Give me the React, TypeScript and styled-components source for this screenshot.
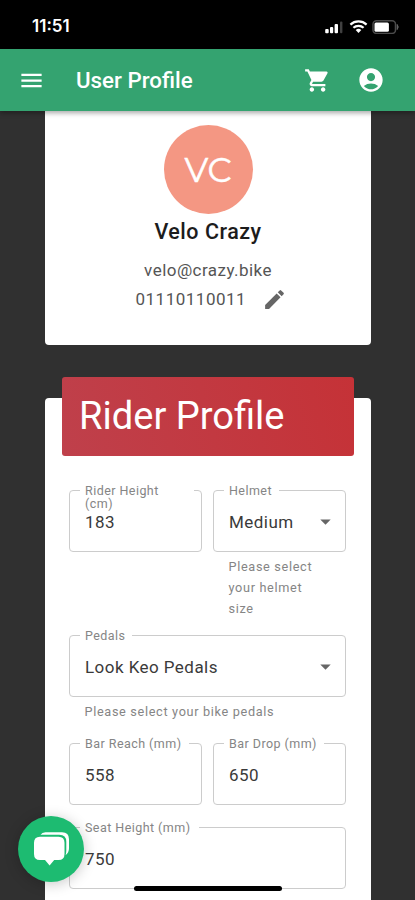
import React from "react";
import styled, { createGlobalStyle } from "styled-components";
import { MdMenu, MdShoppingCart, MdAccountCircle, MdEdit, MdArrowDropDown } from "react-icons/md";

const GlobalStyle = createGlobalStyle`
  * { box-sizing: border-box; }
  html, body { margin: 0; background: #303030; overflow: hidden; }
  body { font-family: Roboto, "Liberation Sans", sans-serif; }
`;

const Screen = styled.div`
  position: relative;
  width: 415px;
  height: 900px;
  overflow: hidden;
  display: flex;
  flex-direction: column;
  background: #303030;
`;

const StatusBar = styled.div`
  flex: none;
  height: 49px;
  padding: 3px 14px 0 32px;
  display: flex;
  align-items: center;
  justify-content: space-between;
  background: #000;
  color: #fff;
`;

const Clock = styled.span`
  font-family: Inter, sans-serif;
  font-size: 17px;
  font-weight: 600;
  letter-spacing: 0;
`;

const AppBar = styled.header`
  flex: none;
  z-index: 1;
  height: 62px;
  padding: 0 30px 0 18px;
  display: flex;
  align-items: center;
  background: #34a370;
  color: #fff;
  box-shadow: 0 2px 5px rgba(0, 0, 0, 0.35);
  svg { display: block; }
`;

const AppTitle = styled.h1`
  flex: 1;
  margin: 0 0 0 31px;
  font-size: 22.3px;
  font-weight: 500;
  line-height: 30px;
`;

const Actions = styled.div`
  display: flex;
  align-items: center;
  gap: 26px;
`;

const Content = styled.main`
  flex: none;
  width: 326px;
  margin-left: 45px;
`;

const ProfileCard = styled.section`
  height: 234px;
  padding-top: 14px;
  display: flex;
  flex-direction: column;
  align-items: center;
  background: #fff;
  border-radius: 0 0 4px 4px;
`;

const Avatar = styled.div`
  width: 89px;
  height: 89px;
  border-radius: 50%;
  display: flex;
  align-items: center;
  justify-content: center;
  background: #f49783;
  color: #fff;
  font-family: Montserrat, Lato, sans-serif;
  font-size: 34px;
  line-height: 40px;
  -webkit-text-stroke: 0.5px #fff;
`;

const Name = styled.h2`
  margin: 4px 0 0;
  color: #1c1c1c;
  font-size: 21.5px;
  font-weight: 500;
  line-height: 28px;
  letter-spacing: 0.5px;
`;

const Email = styled.p`
  margin: 10px 0 0;
  color: #555;
  font-size: 17px;
  line-height: 29px;
  letter-spacing: 0.45px;
`;

const PhoneRow = styled.div`
  width: 151px;
  margin-left: 6px;
  display: flex;
  align-items: center;
  justify-content: space-between;
  color: #555;
  font-size: 17px;
  line-height: 29px;
  letter-spacing: 0.5px;
  svg { color: #666; }
`;

const RiderCard = styled.section`
  height: 560px;
  margin-top: 53px;
  padding: 0 25px 0 24px;
  background: #fff;
  border-radius: 4px 4px 0 0;
`;

const Banner = styled.h2`
  width: 292px;
  height: 79px;
  margin: 0 0 13px -7px;
  padding: 0 17px;
  transform: translateY(-21px);
  border-radius: 3px;
  background: linear-gradient(75deg, #bf404b, #c53237);
  color: #fff;
  font-size: 38.1px;
  font-weight: 400;
  line-height: 79px;
`;

const Form = styled.div`
  display: grid;
  grid-template-columns: 133px 133px;
  column-gap: 11px;
`;

const FieldCell = styled.div<{ $wide?: boolean; $space: number }>`
  grid-column: ${(p) => (p.$wide ? "span 2" : "auto")};
  height: ${(p) => p.$space}px;
`;

const Outline = styled.div`
  position: relative;
  height: 62px;
  padding: 1px 7px 0 15px;
  display: flex;
  align-items: center;
  justify-content: space-between;
  border: 1px solid #ccc;
  border-radius: 4px;
  color: #3a3a3a;
  font-size: 17px;
  line-height: 24px;
  letter-spacing: 0.45px;
`;

const Label = styled.label<{ $gap: number }>`
  position: absolute;
  left: 10px;
  top: -7px;
  width: ${(p) => p.$gap}px;
  padding: 0 5px;
  background: linear-gradient(#fff, #fff) 0 0 / 100% 12px no-repeat;
  color: #858585;
  font-size: 12.5px;
  line-height: 13px;
  letter-spacing: 0.45px;
`;

const Helper = styled.p`
  margin: 4px 25px 0 15.5px;
  color: #858585;
  font-size: 12.7px;
  line-height: 21px;
  letter-spacing: 0.67px;
`;

const ChatButton = styled.button`
  position: absolute;
  left: 18px;
  top: 816px;
  width: 66px;
  height: 66px;
  padding: 0;
  border: 0;
  border-radius: 50%;
  background: #1dbb71;
  box-shadow: 0 2px 14px rgba(0, 0, 0, 0.22);
  svg { display: block; }
`;

const HomeIndicator = styled.div`
  position: absolute;
  left: 134px;
  top: 886px;
  width: 148px;
  height: 5px;
  border-radius: 3px;
  background: #000;
`;

const StatusIcons = () => (
  <svg width="76" height="16" viewBox="0 0 76 16">
    <g fill="#fff">
      <rect x="0.2" y="11" width="3.5" height="4.2" rx="1" />
      <rect x="5" y="9" width="3.2" height="6.2" rx="1" />
      <rect x="9.6" y="6" width="3.4" height="9.2" rx="1" />
    </g>
    <rect x="15" y="3.5" width="2.4" height="11.7" rx="1" fill="#414141" />
    <g fill="none" stroke="#fff" strokeWidth="2.2">
      <path d="M25.4 6.6a12 12 0 0 1 16.2 0" />
      <path d="M28.4 9.8a7.5 7.5 0 0 1 10.2 0" />
    </g>
    <path d="M30.7 12a4.2 4.2 0 0 1 5.6 0l-2.8 3z" fill="#fff" />
    <rect x="48" y="2.8" width="22.5" height="12.6" rx="3.5" fill="none" stroke="#4b4b4b" strokeWidth="1.5" />
    <rect x="49.5" y="4.5" width="14.4" height="9.2" rx="1.5" fill="#fff" />
    <path d="M72.2 6.5v5q2-2.5 0-5" fill="#656565" stroke="#656565" />
  </svg>
);

const ChatIcon = () => (
  <svg width="66" height="66" viewBox="0 0 66 66" fill="#fff">
    <path d="M22.5 18.8Q24 16.300 27.5 16.300H44q7 0 7 7v9q0 4.600-3.400 6.900.7-2 .7-4.600v-8.800Q48.300 18.800 41.300 18.800z" />
    <path d="M22 20.800h18.500q6 0 6 6V38q0 6-6 6H36.200L31.600 49.500 27 44H22q-6 0-6-6V26.800q0-6 6-6z" />
  </svg>
);

interface FieldProps {
  label: string;
  value: string;
  gap: number;
  space: number;
  wide?: boolean;
  select?: boolean;
  helper?: string;
}

const Field = ({ label, value, gap, space, wide, select, helper }: FieldProps) => (
  <FieldCell $wide={wide} $space={space}>
    <Outline>
      <Label $gap={gap}>{label}</Label>
      <span>{value}</span>
      {select && <MdArrowDropDown size={25} color="#666" />}
    </Outline>
    {helper && <Helper>{helper}</Helper>}
  </FieldCell>
);

export default function App() {
  return (
    <Screen>
      <GlobalStyle />
      <StatusBar>
        <Clock>11:51</Clock>
        <StatusIcons />
      </StatusBar>
      <AppBar>
        <MdMenu size={27} />
        <AppTitle>User Profile</AppTitle>
        <Actions>
          <MdShoppingCart size={27} />
          <MdAccountCircle size={28} />
        </Actions>
      </AppBar>
      <Content>
        <ProfileCard>
          <Avatar>VC</Avatar>
          <Name>Velo Crazy</Name>
          <Email>velo@crazy.bike</Email>
          <PhoneRow>
            <span>01110110011</span>
            <MdEdit size={25} />
          </PhoneRow>
        </ProfileCard>
        <RiderCard>
          <Banner>Rider Profile</Banner>
          <Form>
            <Field label="Rider Height (cm)" value="183" gap={114} space={145} />
            <Field label="Helmet" value="Medium" gap={55} space={145} select helper="Please select your helmet size" />
            <Field label="Pedals" value="Look Keo Pedals" gap={52} space={108} wide select helper="Please select your bike pedals" />
            <Field label="Bar Reach (mm)" value="558" gap={109} space={84} />
            <Field label="Bar Drop (mm)" value="650" gap={100} space={84} />
            <Field label="Seat Height (mm)" value="750" gap={119} space={62} wide />
          </Form>
        </RiderCard>
      </Content>
      <ChatButton aria-label="Chat">
        <ChatIcon />
      </ChatButton>
      <HomeIndicator />
    </Screen>
  );
}
